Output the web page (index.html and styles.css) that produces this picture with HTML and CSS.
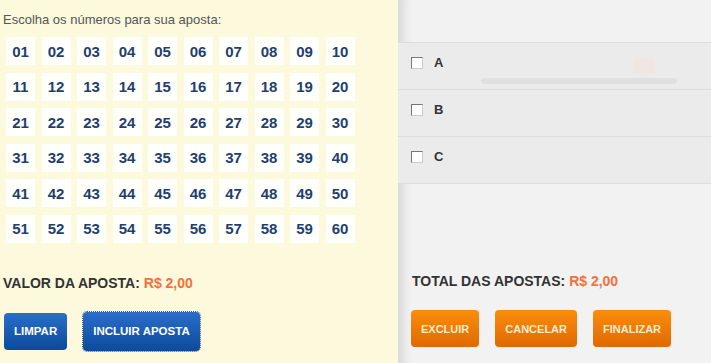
FILE: index.html
```html
<!DOCTYPE html>
<html lang="pt-BR">

<head>
    <meta charset="UTF-8">
    <title>Aposta</title>

    <link rel="stylesheet" href="styles.css">
</head>

<body>
    <div id="app">
        <div id="bet-panel">
            <p class="hint">Escolha os números para sua aposta:</p>
            <div id="numbers">
                <span class="num">01</span><span class="num">02</span><span class="num">03</span><span class="num">04</span><span class="num">05</span>
                <span class="num">06</span><span class="num">07</span><span class="num">08</span><span class="num">09</span><span class="num">10</span>
                <span class="num">11</span><span class="num">12</span><span class="num">13</span><span class="num">14</span><span class="num">15</span>
                <span class="num">16</span><span class="num">17</span><span class="num">18</span><span class="num">19</span><span class="num">20</span>
                <span class="num">21</span><span class="num">22</span><span class="num">23</span><span class="num">24</span><span class="num">25</span>
                <span class="num">26</span><span class="num">27</span><span class="num">28</span><span class="num">29</span><span class="num">30</span>
                <span class="num">31</span><span class="num">32</span><span class="num">33</span><span class="num">34</span><span class="num">35</span>
                <span class="num">36</span><span class="num">37</span><span class="num">38</span><span class="num">39</span><span class="num">40</span>
                <span class="num">41</span><span class="num">42</span><span class="num">43</span><span class="num">44</span><span class="num">45</span>
                <span class="num">46</span><span class="num">47</span><span class="num">48</span><span class="num">49</span><span class="num">50</span>
                <span class="num">51</span><span class="num">52</span><span class="num">53</span><span class="num">54</span><span class="num">55</span>
                <span class="num">56</span><span class="num">57</span><span class="num">58</span><span class="num">59</span><span class="num">60</span>
            </div>
            <div class="total">VALOR DA APOSTA: <span class="price">R$ 2,00</span></div>
            <div class="actions">
                <button class="btn blue">LIMPAR</button>
                <button class="btn blue focused">INCLUIR APOSTA</button>
            </div>
        </div>
        <div id="list-panel">
            <div class="list-head"></div>
            <div class="bet-row">
                <span class="check"></span><span class="label">A</span>
                <span class="ghost-box"></span>
                <span class="ghost-bar"></span>
            </div>
            <div class="bet-row">
                <span class="check"></span><span class="label">B</span>
            </div>
            <div class="bet-row">
                <span class="check"></span><span class="label">C</span>
            </div>
            <div class="spacer"></div>
            <div class="total">TOTAL DAS APOSTAS: <span class="price">R$ 2,00</span></div>
            <div class="actions">
                <button class="btn orange">EXCLUIR</button>
                <button class="btn orange">CANCELAR</button>
                <button class="btn orange">FINALIZAR</button>
            </div>
        </div>
    </div>
</body>

</html>
```

FILE: styles.css
```css
body,
html {
    width: 100%;
    height: 100%;
    margin: 0;
    padding: 0;
    overflow: hidden;
}

#app {
    display: flex;
    height: 100%;
    font-family: 'Liberation Sans', Arial, sans-serif;
}

#bet-panel {
    width: 398px;
    background-color: #fcf9dd;
    display: flex;
    flex-direction: column;
}

.hint {
    margin: 12px 0 0 3px;
    font-size: 13px;
    line-height: 16px;
    color: #555;
}

#numbers {
    display: grid;
    grid-template-columns: repeat(10, 29px);
    grid-auto-rows: 28px;
    column-gap: 6.5px;
    row-gap: 7.6px;
    margin: 9px 0 0 6px;
}

.num {
    display: flex;
    align-items: center;
    justify-content: center;
    background-color: #fffffb;
    color: #1f3f70;
    font-size: 15px;
    font-weight: bold;
}

.total {
    font-size: 14px;
    font-weight: bold;
    color: #333;
    line-height: 16px;
}

#bet-panel .total {
    margin: 32px 0 0 3px;
}

.price {
    color: #f4703a;
}

.actions {
    display: flex;
    gap: 16px;
}

#bet-panel .actions {
    margin: 21px 0 0 4px;
    align-items: center;
}

.btn {
    height: 37px;
    border: 0;
    border-radius: 4px;
    padding: 0 10px;
    font-family: inherit;
    font-size: 11.5px;
    font-weight: bold;
    white-space: nowrap;
    cursor: pointer;
}

.blue {
    background: linear-gradient(#2a6ecb, #0b4a9c);
    color: #fff;
}

.blue.focused {
    height: 39px;
    outline: 1px dotted #555;
}

.orange {
    background: linear-gradient(#fb8d0d, #df6900);
    color: #fdeccb;
    font-size: 11px;
}

#list-panel {
    flex: 1;
    background-color: #f2f2f2;
    box-shadow: inset 14px 0 10px -8px rgba(0, 0, 0, 0.1);
    display: flex;
    flex-direction: column;
}

.list-head {
    height: 42px;
    border-bottom: 1px solid #dcdcdc;
}

.bet-row {
    position: relative;
    height: 47px;
    border-bottom: 1px solid #dddddd;
    background-color: #ebebeb;
    display: flex;
    align-items: flex-start;
    padding: 12px 0 0 13px;
    box-sizing: border-box;
}

.check {
    width: 10px;
    height: 10px;
    border: 1px solid #777;
    border-right-color: #ccc;
    border-bottom-color: #ccc;
    background-color: #fff;
    margin-top: 2px;
}

.label {
    margin-left: 11px;
    font-size: 13px;
    font-weight: bold;
    color: #333;
}

.ghost-box {
    position: absolute;
    left: 235px;
    top: 14px;
    width: 22px;
    height: 18px;
    background-color: #f0e6e4;
}

.ghost-bar {
    position: absolute;
    left: 83px;
    top: 35px;
    width: 196px;
    height: 6px;
    border-radius: 3px;
    background-color: #e0e0e0;
}

.spacer {
    height: 89px;
}

#list-panel .total {
    margin-left: 14px;
}

#list-panel .actions {
    margin: 21px 0 0 13px;
}
```
